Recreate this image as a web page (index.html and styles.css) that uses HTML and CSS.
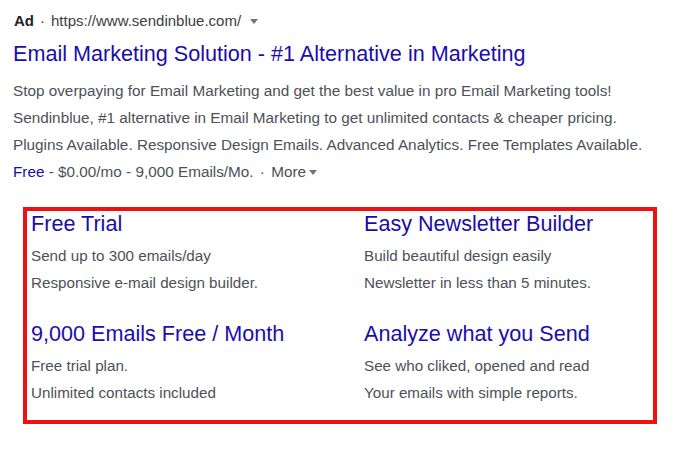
FILE: index.html
```html
<!DOCTYPE html>
<html lang="en">
<head>
<meta charset="utf-8">
<title>Sendinblue Ad</title>
<link rel="stylesheet" href="styles.css">
</head>
<body>
<div class="ad">
  <div class="meta"><span class="ad-label">Ad</span><span class="dot">·</span><span class="url">https://www.sendinblue.com/</span><span class="caret"></span></div>
  <div class="title">Email Marketing Solution - #1 Alternative in Marketing</div>
  <div class="desc">
    <div>Stop overpaying for Email Marketing and get the best value in pro Email Marketing tools!</div>
    <div>Sendinblue, #1 alternative in Email Marketing to get unlimited contacts &amp; cheaper pricing.</div>
    <div>Plugins Available. Responsive Design Emails. Advanced Analytics. Free Templates Available.</div>
    <div><span class="link">Free</span> - $0.00/mo - 9,000 Emails/Mo. <span class="dot2">·</span> More<span class="caret small"></span></div>
  </div>
</div>
<div class="sitelinks">
  <div class="sl">
    <div class="sl-title">Free Trial</div>
    <div class="sl-line">Send up to 300 emails/day</div>
    <div class="sl-line">Responsive e-mail design builder.</div>
  </div>
  <div class="sl">
    <div class="sl-title">Easy Newsletter Builder</div>
    <div class="sl-line">Build beautiful design easily</div>
    <div class="sl-line">Newsletter in less than 5 minutes.</div>
  </div>
  <div class="sl">
    <div class="sl-title">9,000 Emails Free / Month</div>
    <div class="sl-line">Free trial plan.</div>
    <div class="sl-line">Unlimited contacts included</div>
  </div>
  <div class="sl">
    <div class="sl-title">Analyze what you Send</div>
    <div class="sl-line">See who cliked, opened and read</div>
    <div class="sl-line">Your emails with simple reports.</div>
  </div>
</div>
</body>
</html>
```
FILE: styles.css
```css
html, body {
  margin: 0;
  padding: 0;
  background: #ffffff;
}
body {
  font-family: "Liberation Sans", Arial, sans-serif;
  color: #4d5156;
  width: 700px;
  height: 450px;
  overflow: hidden;
}
.ad {
  padding: 12px 0 0 14px;
}
.meta {
  font-size: 15px;
  line-height: 18px;
  color: #3c4043;
  display: flex;
  align-items: center;
}
.ad-label {
  font-weight: bold;
  color: #202124;
}
.dot {
  padding: 0 6px;
}
.caret {
  display: inline-block;
  width: 0;
  height: 0;
  border-left: 4px solid transparent;
  border-right: 4px solid transparent;
  border-top: 5px solid #70757a;
  margin-left: 9px;
}
.caret.small {
  margin-left: 3px;
  vertical-align: middle;
}
.title {
  font-size: 21.6px;
  line-height: 28px;
  color: #1a0dab;
  margin: 10px 0 0 -1px;
}
.desc {
  font-size: 15.3px;
  line-height: 27px;
  margin: 9px 0 0 -1px;
}
.link {
  color: #1a0dab;
}
.dot2 {
  padding: 0 2px;
}
.sitelinks {
  margin: 22px 0 0 23px;
  width: 622px;
  height: 209px;
  border: 4px solid #ee1111;
  padding: 0 0 0 4px;
  box-sizing: content-box;
  display: grid;
  grid-template-columns: 333px 1fr;
  grid-template-rows: 110px 99px;
}
.sl-title {
  font-size: 21.6px;
  line-height: 28px;
  color: #1a0dab;
  margin: -1px 0 4px;
}
.sl-line {
  font-size: 15.2px;
  line-height: 27px;
}
.sl-line + .sl-line {
  margin-top: 0;
}
```
